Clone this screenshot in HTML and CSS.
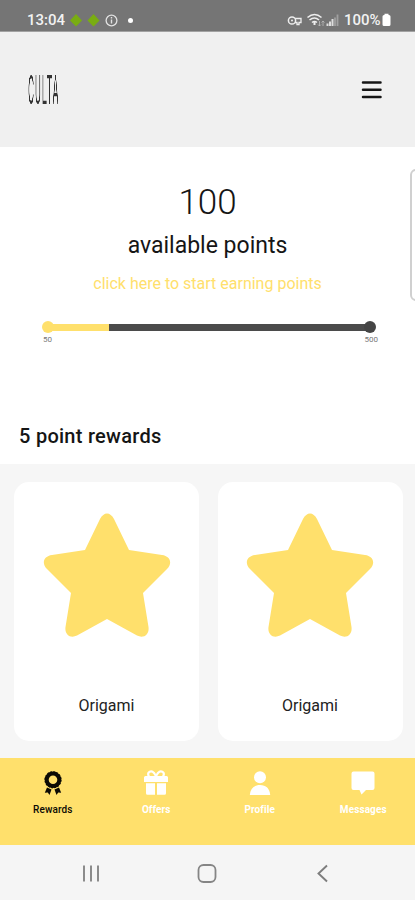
FILE: index.html
```html
<!DOCTYPE html>
<html lang="en">
<head>
<meta charset="utf-8">
<title>Culta Rewards</title>
<link rel="stylesheet" href="styles.css">
</head>
<body>
<div class="status">
  <span class="clock">13:04</span>
  <svg class="notices" width="66" height="16" viewBox="0 0 66 16"><path d="M7 2L13 8.500L7 14.500L1 8.500ZM24.500 2L30.500 8.500L24.500 14.500L18.500 8.500Z" fill="#79ad12"/><circle cx="42.500" cy="8.500" r="5.400" fill="none" stroke="#e2e2e2" stroke-width="1.300"/><path d="M42.500 5v1.500M42.500 7.500v4" stroke="#e2e2e2" stroke-width="1.400"/><circle cx="61.500" cy="8.500" r="2.500" fill="#fff"/></svg>
  <svg class="signals" width="54" height="16" viewBox="0 0 54 16" fill="none" stroke="#eee"><circle cx="5" cy="8.500" r="3.600" stroke-width="1.500"/><circle cx="5" cy="8.500" r="1" fill="#eee" stroke="none"/><path d="M8 6.500h6v4h-2v2h-2v-2H8" stroke-width="1.300"/><path d="M20.500 5.500Q27.500-.5 34.500 5.500M22.500 8Q27.500 4 32 8M25 10.500Q27.500 8.500 30 10.500" stroke-width="1.600"/><path d="M27.500 10v3" stroke-width="2"/><path d="M32.500 9v5m-1.500-1.500l1.500 1.500 1.500-1.500M36 14V9m-1.500 1.500L36 9l1.500 1.500" stroke="#bbb" stroke-width=".8"/><path d="M40.500 14v-2.500M43 14v-4.500M45.500 14V7" stroke="#ddd" stroke-width="2"/><path d="M48 14V5.500M50.500 14V2.500" stroke="#a0a0a0" stroke-width="1.800"/></svg>
  <span class="charge">100%</span>
  <svg class="battery" width="9" height="14" viewBox="0 0 9 14"><path d="M2.500 2V.8h4V2H7a1.500 1.500 0 0 1 1.500 1.500v8A1.500 1.500 0 0 1 7 13H2A1.500 1.500 0 0 1 .5 11.500v-8A1.500 1.500 0 0 1 2 2Z" fill="#fff"/></svg>
</div>
<header class="header">
  <div class="brand"><span class="brand-name">CULTA</span></div>
  <svg class="menu" width="22" height="20" viewBox="0 0 22 20"><path d="M2 2.500h17.500M2 9.800h17.500M2 17h17.500" stroke="#151515" stroke-width="2.500" stroke-linecap="round"/></svg>
</header>
<main>
  <section class="points">
    <div class="total">100</div>
    <div class="caption">available points</div>
    <div class="earn">click here to start earning points</div>
    <div class="track"><span class="start"></span><span class="done"></span><span class="rest"></span><span class="end"></span></div>
    <div class="limits"><span>50</span><span>500</span></div>
    <div class="edge-panel"></div>
  </section>
  <h2 class="heading">5 point rewards</h2>
  <section class="cards">
    <article class="card"><svg class="star" width="128" height="124" viewBox="0 0 128 124"><path d="M42 37L57 6Q60 .5 64 .5Q68 .5 71 6L86 37L119 42C127 43 130 50 124 56L100 80L105.500 114C106.500 121 101 126 94 122.500L64 106L34 122.500C27 126 21.500 121 22.500 114L28 80L4 56C-2 50 1 43 9 42Z" fill="#ffe06c"/></svg><div class="card-name">Origami</div></article>
    <article class="card"><svg class="star" width="128" height="124" viewBox="0 0 128 124"><path d="M42 37L57 6Q60 .5 64 .5Q68 .5 71 6L86 37L119 42C127 43 130 50 124 56L100 80L105.500 114C106.500 121 101 126 94 122.500L64 106L34 122.500C27 126 21.500 121 22.500 114L28 80L4 56C-2 50 1 43 9 42Z" fill="#ffe06c"/></svg><div class="card-name">Origami</div></article>
  </section>
</main>
<nav class="tabs">
  <div class="tab active"><svg width="26" height="26" viewBox="0 0 26 26"><circle cx="13" cy="9.800" r="6.300" fill="none" stroke="currentColor" stroke-width="4"/><circle cx="13" cy="9.800" r="8" fill="none" stroke="currentColor" stroke-width="1.200" stroke-dasharray="2 1.140"/><path d="M7 17.500l4.500 2-2 5.500-1.700-2.500-3 .2ZM19 17.500l-4.500 2 2 5.500 1.700-2.500 3 .2Z" fill="currentColor"/></svg><span>Rewards</span></div>
  <div class="tab"><svg width="26" height="26" viewBox="0 0 26 26"><path d="M6 6.500C3.500 2.500 8-.5 11 3l2 3 2-3c3-3.500 7.500-.5 5 3.500" fill="none" stroke="currentColor" stroke-width="2.200"/><path d="M2.500 6h21A1.500 1.500 0 0 1 25 7.500V12H1V7.500A1.500 1.500 0 0 1 2.500 6ZM3 13.200h9v11.600H4.500A1.500 1.500 0 0 1 3 23.300ZM14 13.200h9v10.100a1.500 1.500 0 0 1-1.500 1.500H14Z" fill="currentColor"/></svg><span>Offers</span></div>
  <div class="tab"><svg width="26" height="26" viewBox="0 0 26 26" fill="currentColor"><circle cx="13" cy="7.300" r="6"/><path d="M2.800 24.900C3.300 18.500 7 15 13 15s9.700 3.500 10.200 9.900Z"/></svg><span>Profile</span></div>
  <div class="tab"><svg width="26" height="26" viewBox="0 0 26 26"><path d="M3.500 1.500h19a2 2 0 0 1 2 2V18a2 2 0 0 1-2 2H16l-4.500 4.500L9.500 20h-6a2 2 0 0 1-2-2V3.500a2 2 0 0 1 2-2Z" fill="currentColor"/></svg><span>Messages</span></div>
</nav>
<footer class="system">
  <svg width="22" height="22" viewBox="0 0 22 22"><path d="M4 2.500v16M11 2.500v16M18 2.500v16" stroke="#8b8b8b" stroke-width="2"/></svg>
  <svg width="22" height="22" viewBox="0 0 22 22"><rect x="2.500" y="2" width="17" height="17" rx="5" fill="none" stroke="#858585" stroke-width="1.800"/></svg>
  <svg width="22" height="22" viewBox="0 0 22 22"><path d="M15 2.500L6.500 10.500L15 18.500" fill="none" stroke="#7d7d7d" stroke-width="1.900"/></svg>
</footer>
</body>
</html>
```
FILE: styles.css
```css
* { box-sizing: border-box; }
body {
  margin: 0;
  width: 415px;
  height: 900px;
  overflow: hidden;
  display: flex;
  flex-direction: column;
  font-family: Roboto, "Liberation Sans", sans-serif;
  background: #fff;
  color: #151515;
}
svg { display: block; flex: none; }
.status {
  height: 32px;
  flex: none;
  display: flex;
  align-items: center;
  padding: 9px 24px 0 27px;
  background: #757575;
  border-bottom: 1px solid #a2a2a2;
  color: #f2f2f2;
  font-size: 15px;
  line-height: 16px;
}
.clock { width: 42px; font-weight: 500; }
.signals { margin: 0 3px 0 auto; }
.charge { width: 38px; font-weight: 500; white-space: nowrap; }
.header {
  height: 115px;
  flex: none;
  display: flex;
  align-items: center;
  justify-content: space-between;
  padding: 0 32px 0 28px;
  background: #f0f0f0;
}
.brand { width: 34px; height: 40px; }
.brand-name {
  display: block;
  font-size: 40px;
  line-height: 42px;
  letter-spacing: 4px;
  transform: scaleX(.23);
  transform-origin: left;
  will-change: transform;
  color: #333;
}
main { height: 611px; flex: none; }
.points {
  position: relative;
  height: 257px;
  padding-top: 35px;
  text-align: center;
}
.total { font-size: 35px; line-height: 42px; font-weight: 350; }
.caption { font-size: 23px; line-height: 30px; margin-top: 7px; }
.earn { font-size: 16px; line-height: 20px; margin-top: 13px; color: #ffe06c; }
.track {
  display: flex;
  align-items: center;
  height: 12px;
  margin: 27px 39px 0 42px;
}
.start, .end { width: 12px; height: 12px; border-radius: 50%; }
.start { background: #ffe06c; margin-right: -2px; }
.end { background: #454545; margin-left: -2px; }
.done { width: 57px; height: 7px; background: #ffe06c; }
.rest { flex: 1; height: 7px; background: #4b4b4b; }
.limits {
  display: flex;
  justify-content: space-between;
  padding: 2px 37px 0 43px;
  font-size: 8px;
  line-height: 10px;
  color: #777;
}
.edge-panel {
  position: absolute;
  top: 22px;
  right: -4px;
  width: 9px;
  height: 132px;
  border: 2px solid #d0d0d0;
  border-radius: 6px 0 0 6px;
}
.heading {
  margin: 0;
  height: 60px;
  padding: 20px 19px 0;
  font-size: 20px;
  line-height: 24px;
  letter-spacing: .27px;
  font-weight: 500;
}
.cards {
  height: 294px;
  display: grid;
  grid-template-columns: 185px 185px;
  gap: 18.500px;
  padding: 18px 0 17px 14px;
  background: #f6f6f6;
}
.card {
  display: flex;
  flex-direction: column;
  align-items: center;
  padding-top: 31px;
  border-radius: 15px;
  background: #fff;
}
.card-name { margin-top: 59px; font-size: 16px; line-height: 20px; color: #222; }
.tabs {
  height: 87px;
  flex: none;
  display: grid;
  grid-template-columns: repeat(4, 1fr);
  padding: 12px 0 0 1px;
  background: #ffe06c;
}
.tab {
  display: flex;
  flex-direction: column;
  align-items: center;
  color: #fff;
  font-size: 10px;
  line-height: 14px;
  font-weight: 700;
}
.tab span { margin-top: 7px; letter-spacing: .1px; }
.tab.active { color: #0c0a04; font-weight: 500; }
.system {
  height: 55px;
  flex: none;
  display: flex;
  justify-content: space-between;
  padding: 18px 81px 0 80px;
  background: #f5f5f5;
}
```
